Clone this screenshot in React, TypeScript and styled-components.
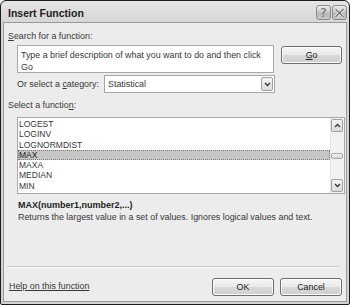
import React from "react";
import styled, { createGlobalStyle } from "styled-components";

const GlobalStyle = createGlobalStyle`
  html, body {
    margin: 0;
    padding: 0;
    background: #ffffff;
  }
  body {
    font-family: "Liberation Sans", Arial, sans-serif;
    font-size: 8.9px;
    color: #383838;
  }
`;

const Window = styled.div`
  width: 350px;
  height: 305px;
  box-sizing: border-box;
  border: 1px solid #1c1c1c;
  border-radius: 6px 6px 2px 2px;
  background: linear-gradient(#e4e4e4, #d6d6d6 22px, #d2d2d2);
  padding: 0 2px 2px 2px;
  display: flex;
  flex-direction: column;
  overflow: hidden;
`;

const TitleBar = styled.div`
  height: 21px;
  flex: 0 0 21px;
  display: flex;
  align-items: center;
  padding-left: 5px;
`;

const Title = styled.div`
  flex: 1;
  font-size: 10.5px;
  font-weight: bold;
  color: #202020;
  padding-top: 2px;
`;

const CaptionButton = styled.div`
  width: 15px;
  height: 15px;
  box-sizing: border-box;
  border: 1px solid #8a8a8a;
  border-radius: 3px;
  background: linear-gradient(#eeeeee, #c4c4c4 50%, #b4b4b4 51%, #c8c8c8);
  display: flex;
  align-items: center;
  justify-content: center;
  margin-left: 1px;
  margin-top: 2px;
  font-size: 12px;
  color: #6a6a6a;
  font-family: "DejaVu Sans", sans-serif;
  line-height: 1;
`;

const Body = styled.div`
  flex: 1;
  background: #ececec;
  border: 1px solid #9a9a9a;
  display: flex;
  flex-direction: column;
  padding: 0 4px 0 3px;
`;

const Label = styled.div<{ $top: number }>`
  margin-top: ${p => p.$top}px;
  margin-left: 1px;
  line-height: 10px;
  height: 10px;
  white-space: nowrap;
`;

const Row = styled.div<{ $top: number }>`
  display: flex;
  align-items: flex-start;
  margin-top: ${p => p.$top}px;
  margin-left: 10px;
`;

const SearchBox = styled.div`
  width: 258px;
  height: 28px;
  box-sizing: border-box;
  border: 1px solid #a8a8a8;
  background: #ffffff;
  padding: 4px 0 0 3px;
  line-height: 11.5px;
  white-space: nowrap;
`;

const PushButton = styled.div<{ $width: number }>`
  width: ${p => p.$width}px;
  height: 18px;
  box-sizing: border-box;
  border: 1px solid #6e6e6e;
  border-radius: 3px;
  background: linear-gradient(#f6f6f6, #e8e8e8 50%, #d8d8d8 51%, #d0d0d0);
  box-shadow: inset 0 0 0 1px #fbfbfb;
  display: flex;
  align-items: center;
  justify-content: center;
  color: #222;
`;

const GoButton = styled(PushButton)`
  margin-left: 7px;
  margin-top: 1px;
`;

const CategoryLabel = styled.div`
  width: 87px;
  line-height: 18px;
`;

const Select = styled.div`
  width: 171px;
  height: 18px;
  box-sizing: border-box;
  border: 1px solid #a8a8a8;
  background: #ffffff;
  display: flex;
  align-items: center;
  justify-content: space-between;
  padding-left: 3px;
`;

const ArrowButton = styled.div<{ $h?: number }>`
  width: 12px;
  height: ${p => p.$h || 14}px;
  box-sizing: border-box;
  border: 1px solid #a0a0a0;
  border-radius: 2px;
  background: linear-gradient(#f4f4f4, #dcdcdc);
  display: flex;
  align-items: center;
  justify-content: center;
  margin-right: 1px;
`;

const ListBox = styled.div`
  margin-top: 7px;
  margin-left: 10px;
  width: 328px;
  height: 77px;
  box-sizing: border-box;
  border: 1px solid #a8a8a8;
  background: #ffffff;
  display: flex;
`;

const Items = styled.div`
  flex: 1;
  padding-top: 1px;
  font-size: 8.5px;
`;

const Item = styled.div<{ $selected?: boolean }>`
  height: 10.3px;
  line-height: 10.3px;
  padding-left: 1px;
  color: ${p => (p.$selected ? "#1a1a1a" : "#383838")};
  background: ${p => (p.$selected ? "#c6c6c6" : "transparent")};
  outline: ${p => (p.$selected ? "1px dotted #7a7a7a" : "none")};
  outline-offset: -1px;
`;

const ScrollBar = styled.div`
  width: 14px;
  background: #f2f2f2;
  border-left: 1px solid #e6e6e6;
  display: flex;
  flex-direction: column;
  align-items: center;
  justify-content: space-between;
  padding: 1px 0;
  box-sizing: border-box;
`;

const Thumb = styled.div`
  width: 12px;
  height: 6px;
  box-sizing: border-box;
  border: 1px solid #a8a8a8;
  border-radius: 2px;
  background: linear-gradient(#f4f4f4, #d8d8d8);
  margin-right: 1px;
`;

const Syntax = styled.div`
  margin-top: 5px;
  margin-left: 11px;
  font-weight: bold;
  font-size: 9px;
  line-height: 12px;
  color: #1e1e1e;
`;

const Description = styled.div`
  margin-left: 11px;
  line-height: 12px;
  white-space: nowrap;
`;

const Spacer = styled.div`
  flex: 1;
`;

const Separator = styled.div`
  height: 1px;
  background: #c4c4c4;
  border-bottom: 1px solid #fafafa;
  margin-right: 3px;
`;

const Footer = styled.div`
  display: flex;
  align-items: flex-start;
  padding-top: 10px;
  margin-bottom: 5px;
`;

const HelpLink = styled.a`
  flex: 1;
  color: #383838;
  text-decoration: underline;
  margin-left: 2px;
  padding-top: 3px;
`;

const FooterButtons = styled.div`
  display: flex;
  gap: 6px;
`;

const Chevron = ({ up }: { up?: boolean }) => (
  <svg width="7" height="5" viewBox="0 0 7 5">
    <path
      d={up ? "M1 4 L3.5 1.5 L6 4" : "M1 1 L3.5 3.5 L6 1"}
      fill="none"
      stroke="#3a3a3a"
      strokeWidth="1.4"
    />
  </svg>
);

const functions = ["LOGEST", "LOGINV", "LOGNORMDIST", "MAX", "MAXA", "MEDIAN", "MIN"];

export default function App() {
  return (
    <>
      <GlobalStyle />
      <Window>
        <TitleBar>
          <Title>Insert Function</Title>
          <CaptionButton>?</CaptionButton>
          <CaptionButton>
            <svg width="11" height="10" viewBox="0 0 11 10">
              <path d="M1.5 1 L9.5 9 M9.5 1 L1.5 9" stroke="#f4f4f4" strokeWidth="3" />
              <path d="M1.5 1 L9.5 9 M9.5 1 L1.5 9" stroke="#6a6a6a" strokeWidth="1.2" />
            </svg>
          </CaptionButton>
        </TitleBar>
        <Body>
          <Label $top={8}>
            <u>S</u>earch for a function:
          </Label>
          <Row $top={4}>
            <SearchBox>
              Type a brief description of what you want to do and then click
              <br />
              Go
            </SearchBox>
            <GoButton $width={61}>
              <span>
                <u>G</u>o
              </span>
            </GoButton>
          </Row>
          <Row $top={2}>
            <CategoryLabel>
              Or select a <u>c</u>ategory:
            </CategoryLabel>
            <Select>
              <span>Statistical</span>
              <ArrowButton>
                <Chevron />
              </ArrowButton>
            </Select>
          </Row>
          <Label $top={7}>
            Select a functio<u>n</u>:
          </Label>
          <ListBox>
            <Items>
              {functions.map(name => (
                <Item key={name} $selected={name === "MAX"}>
                  {name}
                </Item>
              ))}
            </Items>
            <ScrollBar>
              <ArrowButton $h={13}>
                <Chevron up />
              </ArrowButton>
              <Thumb />
              <ArrowButton $h={13}>
                <Chevron />
              </ArrowButton>
            </ScrollBar>
          </ListBox>
          <Syntax>MAX(number1,number2,...)</Syntax>
          <Description>
            Returns the largest value in a set of values. Ignores logical values and text.
          </Description>
          <Spacer />
          <Separator />
          <Footer>
            <HelpLink>Help on this function</HelpLink>
            <FooterButtons>
              <PushButton $width={62}>OK</PushButton>
              <PushButton $width={62}>Cancel</PushButton>
            </FooterButtons>
          </Footer>
        </Body>
      </Window>
    </>
  );
}
